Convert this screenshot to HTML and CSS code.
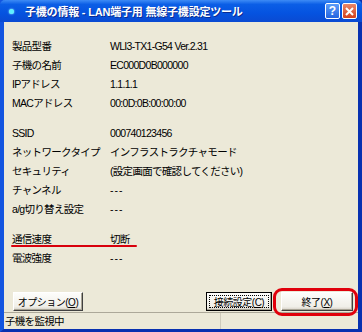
FILE: index.html
```html
<!DOCTYPE html>
<html lang="ja">
<head>
  <meta charset="UTF-8">
  <title>子機の情報</title>
  <link rel="stylesheet" href="styles.css">
</head>
<body>
  <div class="ventana">
    <div class="titulo">
      <span class="icono"></span>
      <span class="texto-titulo">子機の情報 - LAN端子用 無線子機設定ツール</span>
      <span class="btn-titulo ayuda">?</span>
      <span class="btn-titulo cerrar">
        <svg width="9" height="9" viewBox="0 0 9 9"><path d="M1 1L8 8M8 1L1 8" stroke="#fff" stroke-width="2"/></svg>
      </span>
    </div>

    <div class="cuerpo">
      <div class="grupo">
        <div class="fila"><span>製品型番</span><span>WLI3-TX1-G54 Ver.2.31</span></div>
        <div class="fila"><span>子機の名前</span><span>EC000D0B000000</span></div>
        <div class="fila"><span>IPアドレス</span><span>1.1.1.1</span></div>
        <div class="fila"><span>MACアドレス</span><span>00:0D:0B:00:00:00</span></div>
      </div>

      <div class="grupo">
        <div class="fila"><span>SSID</span><span>000740123456</span></div>
        <div class="fila"><span>ネットワークタイプ</span><span>インフラストラクチャモード</span></div>
        <div class="fila"><span>セキュリティ</span><span>(設定画面で確認してください)</span></div>
        <div class="fila"><span>チャンネル</span><span class="guion">---</span></div>
        <div class="fila"><span>a/g切り替え設定</span><span class="guion">---</span></div>
      </div>

      <div class="grupo">
        <div class="fila marcada"><span>通信速度</span><span>切断</span></div>
        <div class="fila"><span>電波強度</span><span class="guion">---</span></div>
      </div>

      <div class="botones">
        <button class="boton">オプション(<u>O</u>)</button>
        <div class="derecha">
          <button class="boton foco">接続設定(<u>C</u>)</button>
          <span class="rodeado"><button class="boton">終了(<u>X</u>)</button></span>
        </div>
      </div>
    </div>

    <div class="estado">
      <span class="panel">子機を監視中</span>
      <span class="panel chico"></span>
    </div>
  </div>
</body>
</html>
```

FILE: styles.css
```css
body {
  margin: 0;
  font-family: "Liberation Sans", "Noto Sans CJK JP", sans-serif;
  font-size: 10.5px;
  letter-spacing: -0.7px;
  color: #000;
}

.ventana {
  width: 362px;
  height: 332px;
  box-sizing: border-box;
  background-color: #0a3fd0;
  border-left: 4px solid #1355e0;
  border-right: 4px solid #0831b0;
  border-bottom: 3px solid #0831b0;
  display: flex;
  flex-direction: column;
}

.titulo {
  height: 22px;
  margin: 0 -4px;
  padding: 0 4px 0 6px;
  display: flex;
  align-items: center;
  background: linear-gradient(#3d8bf5 0%, #0b5ee6 20%, #0553e0 60%, #0a4ad2 100%);
  border-radius: 5px 5px 0 0;
  color: #fff;
}

.icono {
  width: 5px;
  height: 5px;
  border-radius: 50%;
  background-color: #5ff0ff;
  box-shadow: 0 0 2px #bff;
  margin: 0 11px 0 3px;
}

.texto-titulo {
  flex: 1;
  font-weight: bold;
  font-size: 11px;
  letter-spacing: -0.2px;
  white-space: nowrap;
  text-shadow: 1px 1px 0 #0a2a90;
}

.btn-titulo {
  width: 15px;
  height: 16px;
  box-sizing: border-box;
  border: 1px solid #fff;
  border-radius: 2px;
  display: flex;
  align-items: center;
  justify-content: center;
  margin-left: 2px;
  font-weight: bold;
  font-size: 12px;
  letter-spacing: 0;
}

.ayuda {
  background: linear-gradient(#5d9cf8, #2465e0);
}

.cerrar {
  background: linear-gradient(#e9886a, #d4411c);
  margin-right: 1px;
}

.cuerpo {
  flex: 1;
  background-color: #ece9d8;
  padding: 14px 5px 0 8px;
  display: flex;
  flex-direction: column;
}

.grupo {
  margin-bottom: 11px;
}

.fila {
  display: grid;
  grid-template-columns: 98px 1fr;
  height: 19px;
  align-items: center;
  white-space: nowrap;
  position: relative;
}

.guion {
  letter-spacing: 1px;
}

.marcada::after {
  content: "";
  position: absolute;
  left: -1px;
  width: 126px;
  top: 16px;
  height: 2px;
  background-color: #d8000c;
  border-radius: 1px;
}

.botones {
  margin-top: auto;
  margin-bottom: 1px;
  display: flex;
  justify-content: space-between;
  align-items: center;
}

.derecha {
  display: flex;
  align-items: center;
  gap: 9px;
}

.boton {
  font-family: inherit;
  font-size: 10px;
  letter-spacing: -0.5px;
  white-space: nowrap;
  height: 19px;
  padding: 0;
  background: linear-gradient(#fdfdfb, #f0efe8 80%, #d6d0c5);
  border: 1px solid #555;
  border-color: #fff #404040 #404040 #fff;
  box-shadow: inset -1px -1px 0 #a8a495;
  color: #000;
}

.botones > .boton {
  width: 70px;
  margin-left: 1px;
}

.foco {
  width: 66px;
  outline: 1px dotted #000;
  outline-offset: -4px;
  border-color: #000;
}

.rodeado {
  display: flex;
  position: relative;
}

.rodeado::after {
  content: "";
  position: absolute;
  inset: -4px -5px -5px -8px;
  border: 3px solid #e0000b;
  border-radius: 9px;
}

.rodeado .boton {
  width: 72px;
}

.estado {
  height: 16px;
  background-color: #ece9d8;
  border-top: 1px solid #aca899;
  display: flex;
}

.panel {
  flex: 1;
  padding-left: 1px;
  line-height: 16px;
}

.chico {
  flex: none;
  width: 136px;
  border-left: 1px solid #d0ccbc;
}
```
